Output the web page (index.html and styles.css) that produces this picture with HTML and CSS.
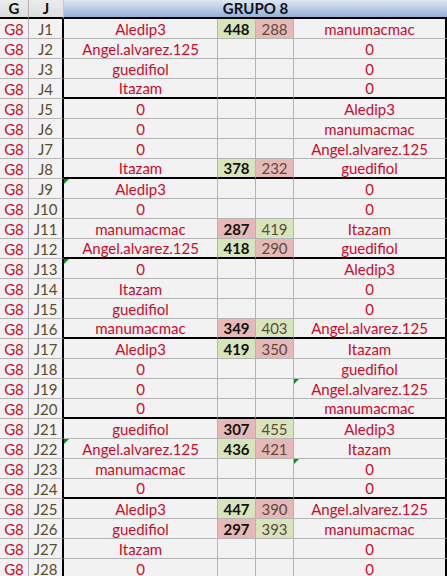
FILE: index.html
```html
<!DOCTYPE html>
<html>
<head>
<meta charset="utf-8">
<link rel="stylesheet" href="styles.css">
</head>
<body>
<div class="sheet">
  <div class="row head">
    <div class="c hg">G</div>
    <div class="c hj">J</div>
    <div class="c hgrp">GRUPO 8</div>
  </div>

  <div class="row"><div class="c g">G8</div><div class="c j">J1</div><div class="c n">Aledip3</div><div class="c s1 win">448</div><div class="c s2 lose">288</div><div class="c n2">manumacmac</div></div>
  <div class="row"><div class="c g">G8</div><div class="c j">J2</div><div class="c n">Angel.alvarez.125</div><div class="c s1"></div><div class="c s2"></div><div class="c n2">0</div></div>
  <div class="row"><div class="c g">G8</div><div class="c j">J3</div><div class="c n">guedifiol</div><div class="c s1"></div><div class="c s2"></div><div class="c n2">0</div></div>
  <div class="row end"><div class="c g">G8</div><div class="c j">J4</div><div class="c n">Itazam</div><div class="c s1"></div><div class="c s2"></div><div class="c n2">0</div></div>

  <div class="row"><div class="c g">G8</div><div class="c j">J5</div><div class="c n">0</div><div class="c s1"></div><div class="c s2"></div><div class="c n2">Aledip3</div></div>
  <div class="row"><div class="c g">G8</div><div class="c j">J6</div><div class="c n">0</div><div class="c s1"></div><div class="c s2"></div><div class="c n2">manumacmac</div></div>
  <div class="row"><div class="c g">G8</div><div class="c j">J7</div><div class="c n">0</div><div class="c s1"></div><div class="c s2"></div><div class="c n2">Angel.alvarez.125</div></div>
  <div class="row end"><div class="c g">G8</div><div class="c j">J8</div><div class="c n">Itazam</div><div class="c s1 win">378</div><div class="c s2 lose">232</div><div class="c n2">guedifiol</div></div>

  <div class="row"><div class="c g">G8</div><div class="c j">J9</div><div class="c n tri">Aledip3</div><div class="c s1"></div><div class="c s2"></div><div class="c n2">0</div></div>
  <div class="row"><div class="c g">G8</div><div class="c j">J10</div><div class="c n">0</div><div class="c s1"></div><div class="c s2"></div><div class="c n2">0</div></div>
  <div class="row"><div class="c g">G8</div><div class="c j">J11</div><div class="c n">manumacmac</div><div class="c s1 lose">287</div><div class="c s2 win">419</div><div class="c n2">Itazam</div></div>
  <div class="row end"><div class="c g">G8</div><div class="c j">J12</div><div class="c n">Angel.alvarez.125</div><div class="c s1 win">418</div><div class="c s2 lose">290</div><div class="c n2">guedifiol</div></div>

  <div class="row"><div class="c g">G8</div><div class="c j">J13</div><div class="c n tri">0</div><div class="c s1"></div><div class="c s2"></div><div class="c n2">Aledip3</div></div>
  <div class="row"><div class="c g">G8</div><div class="c j">J14</div><div class="c n">Itazam</div><div class="c s1"></div><div class="c s2"></div><div class="c n2">0</div></div>
  <div class="row"><div class="c g">G8</div><div class="c j">J15</div><div class="c n">guedifiol</div><div class="c s1"></div><div class="c s2"></div><div class="c n2">0</div></div>
  <div class="row end"><div class="c g">G8</div><div class="c j">J16</div><div class="c n">manumacmac</div><div class="c s1 lose">349</div><div class="c s2 win">403</div><div class="c n2">Angel.alvarez.125</div></div>

  <div class="row"><div class="c g">G8</div><div class="c j">J17</div><div class="c n">Aledip3</div><div class="c s1 win">419</div><div class="c s2 lose">350</div><div class="c n2">Itazam</div></div>
  <div class="row"><div class="c g">G8</div><div class="c j">J18</div><div class="c n">0</div><div class="c s1"></div><div class="c s2"></div><div class="c n2">guedifiol</div></div>
  <div class="row"><div class="c g">G8</div><div class="c j">J19</div><div class="c n">0</div><div class="c s1"></div><div class="c s2"></div><div class="c n2 tri">Angel.alvarez.125</div></div>
  <div class="row end"><div class="c g">G8</div><div class="c j">J20</div><div class="c n">0</div><div class="c s1"></div><div class="c s2"></div><div class="c n2">manumacmac</div></div>

  <div class="row"><div class="c g">G8</div><div class="c j">J21</div><div class="c n">guedifiol</div><div class="c s1 lose">307</div><div class="c s2 win">455</div><div class="c n2">Aledip3</div></div>
  <div class="row"><div class="c g">G8</div><div class="c j">J22</div><div class="c n tri">Angel.alvarez.125</div><div class="c s1 win">436</div><div class="c s2 lose">421</div><div class="c n2">Itazam</div></div>
  <div class="row"><div class="c g">G8</div><div class="c j">J23</div><div class="c n">manumacmac</div><div class="c s1"></div><div class="c s2"></div><div class="c n2 tri">0</div></div>
  <div class="row end"><div class="c g">G8</div><div class="c j">J24</div><div class="c n">0</div><div class="c s1"></div><div class="c s2"></div><div class="c n2">0</div></div>

  <div class="row"><div class="c g">G8</div><div class="c j">J25</div><div class="c n">Aledip3</div><div class="c s1 win">447</div><div class="c s2 lose">390</div><div class="c n2">Angel.alvarez.125</div></div>
  <div class="row"><div class="c g">G8</div><div class="c j">J26</div><div class="c n">guedifiol</div><div class="c s1 lose">297</div><div class="c s2 win">393</div><div class="c n2">manumacmac</div></div>
  <div class="row"><div class="c g">G8</div><div class="c j">J27</div><div class="c n">Itazam</div><div class="c s1"></div><div class="c s2"></div><div class="c n2">0</div></div>
  <div class="row"><div class="c g">G8</div><div class="c j">J28</div><div class="c n">0</div><div class="c s1"></div><div class="c s2"></div><div class="c n2">0</div></div>
</div>
</body>
</html>
```

FILE: styles.css
```css
html, body {
  margin: 0;
  padding: 0;
  background: #f2f2f2;
}
.sheet {
  width: 447px;
  font-family: Lato, "Open Sans", sans-serif;
  font-size: 15px;
}
.row {
  display: grid;
  grid-template-columns: 29px 35px 154px 38px 38px 153px;
  height: 20px;
}
.c {
  box-sizing: border-box;
  border-right: 1px solid #b4b4b4;
  border-bottom: 1px solid #b4b4b4;
  background: #f2f2f2;
  display: flex;
  align-items: center;
  justify-content: center;
  white-space: nowrap;
  overflow: hidden;
  position: relative;
  line-height: 1;
  padding-top: 1px;
}
.head {
  height: 19px;
}
.head .c {
  border-bottom: 2px solid #000;
  font-weight: bold;
  color: #111;
  padding-top: 0;
}
.hg, .hj {
  background: linear-gradient(#ececec, #dedede);
}
.hj {
  border-right: 1px solid #c8c8c8;
}
.hgrp {
  grid-column: 3 / 7;
  background: linear-gradient(#dfe8f3, #93b1d9);
  color: #0f1a2e;
  border-right: none;
}
.g {
  color: #cc0a2a;
}
.j {
  color: #5a4b2f;
  border-right: 2px solid #000;
}
.n, .n2 {
  color: #cc0a2a;
}
.n2 {
  border-right: 2px solid #000;
}
.s1 {
  font-weight: bold;
  color: #111;
}
.s2 {
  color: #5a4b3a;
}
.win {
  background: #d8e4bc;
}
.lose {
  background: #e6b8b7;
}
.end .n, .end .s1, .end .s2, .end .n2 {
  border-bottom: 2px solid #000;
}
.tri::before {
  content: "";
  position: absolute;
  left: 0;
  top: 0;
  border-top: 5px solid #138a13;
  border-right: 5px solid transparent;
}
```
